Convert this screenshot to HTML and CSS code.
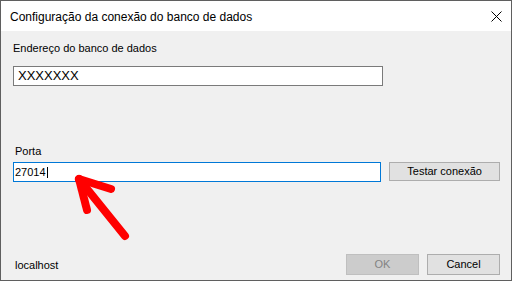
FILE: index.html
```html
<!DOCTYPE html>
<html>
<head>
<meta charset="utf-8">
<link rel="stylesheet" href="styles.css">
</head>
<body>
<div class="window">
  <div class="titlebar">
    <span class="title">Configuração da conexão do banco de dados</span>
    <svg class="close" width="11" height="11" viewBox="0 0 11 11"><path d="M0.5 0.5 L10.5 10.5 M10.5 0.5 L0.5 10.5" stroke="#000" stroke-width="1" fill="none"/></svg>
  </div>
  <div class="content">
    <div class="label">Endereço do banco de dados</div>
    <div class="input input-addr">XXXXXXX</div>
    <div class="label label-port">Porta</div>
    <div class="row">
      <div class="input input-port focused">27014<span class="caret"></span></div>
      <div class="btn btn-test">Testar conexão</div>
    </div>
    <div class="footer">
      <div class="host">localhost</div>
      <div class="btn btn-ok disabled">OK</div>
      <div class="btn btn-cancel">Cancel</div>
    </div>
  </div>
  <svg class="arrow" width="521" height="289" viewBox="0 0 521 289">
    <g stroke="#ff0000" stroke-width="8" stroke-linecap="round" stroke-linejoin="round" fill="none">
      <path d="M79 179 L125 236"/>
      <path d="M79 179 L87 210"/>
      <path d="M79 179 L111 189"/>
    </g>
  </svg>
</div>
</body>
</html>
```
FILE: styles.css
```css
* { box-sizing: border-box; }
html, body { margin: 0; padding: 0; background: #ffffff; }
body { width: 521px; height: 289px; overflow: hidden; font-family: "Liberation Sans", Arial, sans-serif; }
.window {
  position: relative;
  width: 512px;
  height: 281px;
  border: 1px solid #5f5f5f;
  display: flex;
  flex-direction: column;
  background: #f0f0f0;
}
.titlebar {
  height: 30px;
  background: #ffffff;
  display: flex;
  align-items: center;
  padding-left: 9px;
  flex: none;
}
.title {
  font-family: "Liberation Sans", Arial, sans-serif;
  font-size: 12px;
  color: #000;
  flex: 1;
  padding-top: 1px;
}
.close { margin-right: 9px; margin-top: 1px; }
.content {
  flex: 1;
  display: flex;
  flex-direction: column;
  padding: 10px 11px 5px 12px;
  font-size: 11px;
  color: #000;
}
.label { line-height: 15px; height: 15px; }
.input {
  background: #fff;
  border: 1px solid #7a7a7a;
  height: 20px;
  line-height: 18px;
  white-space: nowrap;
}
.input-addr {
  width: 370px;
  margin-top: 10px;
  padding-left: 4px;
  font-size: 13px;
}
.label-port { margin-top: 58px; padding-left: 2px; }
.row { display: flex; margin-top: 3px; gap: 8px; align-items: flex-start; }
.input-port {
  width: 369px;
  padding-left: 1px;
  border-color: #0078d7;
  display: flex;
  align-items: center;
}
.caret { display: inline-block; width: 1px; height: 11px; background: #000; margin-left: 1px; }
.btn {
  border: 1px solid #adadad;
  background: #e1e1e1;
  text-align: center;
  font-size: 11px;
  white-space: nowrap;
}
.btn-test { width: 111px; height: 19px; line-height: 17px; }
.footer { margin-top: auto; display: flex; align-items: center; gap: 8px; }
.host { flex: 1; padding-left: 2px; padding-top: 1px; }
.btn-ok, .btn-cancel { width: 73px; height: 21px; line-height: 19px; }
.disabled { background: #cccccc; border-color: #bfbfbf; color: #838383; }
.arrow { position: absolute; left: -1px; top: -1px; pointer-events: none; }
```
